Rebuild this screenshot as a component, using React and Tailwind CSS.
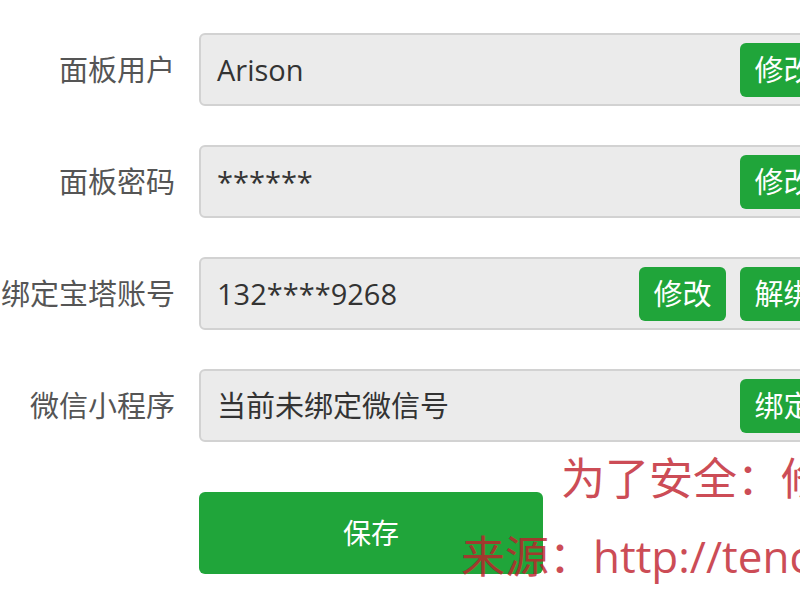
import React from "react";

const font = { fontFamily: '"Open Sans", "Noto Sans CJK SC", sans-serif' };

const rows = [
  { label: "面板用户", value: "Arison", buttons: ["修改"] },
  { label: "面板密码", value: "******", buttons: ["修改"] },
  { label: "绑定宝塔账号", value: "132****9268", buttons: ["修改", "解绑"] },
  { label: "微信小程序", value: "当前未绑定微信号", buttons: ["绑定"] },
];

const Row = ({ label, value, buttons }) => (
  <div className="flex items-center gap-[24px]">
    {/* Label */}
    <div className="w-[175px] shrink-0 flex justify-end whitespace-nowrap text-[29px] text-[#555]">
      {label}
    </div>

    {/* Field with its buttons */}
    <div className="w-[641px] shrink-0 h-[73px] flex items-center gap-[14px] pl-[16px] pr-[11px] bg-[#ebebeb] border-2 border-[#d2d2d2] rounded-[6px]">
      <span className="flex-1 text-[29px] text-[#333] whitespace-nowrap">{value}</span>
      {buttons.map((b) => (
        <button
          key={b}
          className="w-[87px] h-[54px] shrink-0 rounded-[6px] bg-[#20a53a] text-white text-[29px] leading-none"
        >
          {b}
        </button>
      ))}
    </div>
  </div>
);

export default function App() {
  return (
    <div className="relative w-[800px] h-[600px] overflow-hidden bg-white" style={font}>
      <div className="pt-[33px] flex flex-col gap-[39px]">
        {rows.map((r) => (
          <Row key={r.label} {...r} />
        ))}
      </div>

      {/* Save */}
      <div className="pl-[199px] mt-[50px]">
        <button className="w-[344px] h-[82px] rounded-[6px] bg-[#20a53a] text-white text-[28px]">
          保存
        </button>
      </div>

      {/* Red watermark over the page */}
      <div className="absolute left-[561px] top-[456px] whitespace-nowrap text-[44px] leading-none text-[#c0202c] opacity-80">
        为了安全：修改默认用户名
      </div>
      <div className="absolute left-[461px] top-[534px] whitespace-nowrap text-[44px] leading-none text-[#c0202c] opacity-80">
        来源：http://tencent.com
      </div>
    </div>
  );
}
